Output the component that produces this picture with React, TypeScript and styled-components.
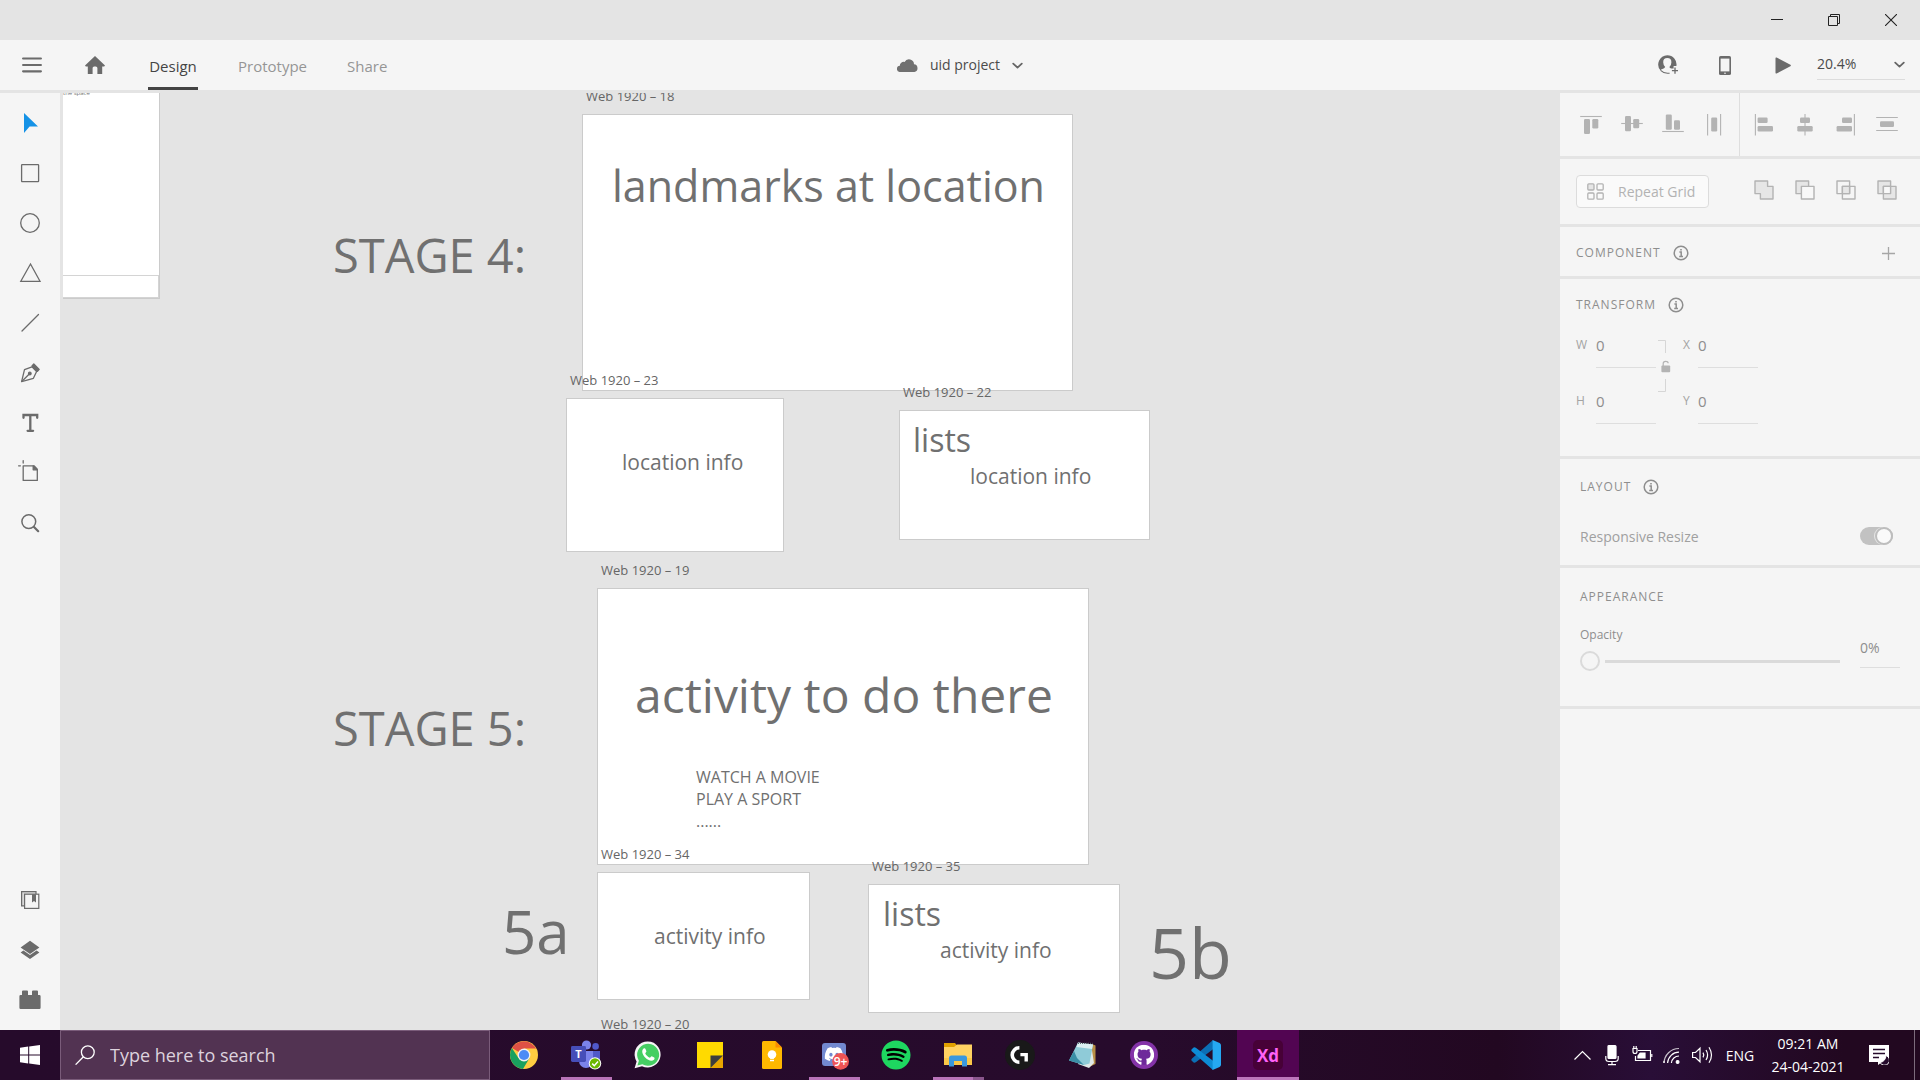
import React from "react";
import styled, { createGlobalStyle, css } from "styled-components";
import { FaDiscord, FaGithub, FaSpotify, FaWhatsapp } from "react-icons/fa";

const GlobalStyle = createGlobalStyle`
  *, *::before, *::after { box-sizing: border-box; }
  body { margin: 0; overflow: hidden; }
  body, button, input, select { font-family: "Open Sans", "Noto Sans", sans-serif; }
  button { border: 0; padding: 0; background: none; color: inherit; cursor: pointer; }
  h2, p { margin: 0; font-weight: 400; }
  svg { display: block; flex: none; }
`;

const color = {
  shell: "#e4e4e4",
  panel: "#f5f5f5",
  icon: "#6b6b6b",
  muted: "#b3b3b3",
  heading: "#8e8e8e",
  canvasText: "#707070",
};

/* ---------- window ---------- */

const Window = styled.div`
  display: flex;
  flex-direction: column;
  height: 100vh;
  background: ${color.shell};
`;

const TitleBar = styled.header`
  display: flex;
  justify-content: flex-end;
  height: 40px;
  padding-right: 1px;
`;

const WindowButton = styled.button`
  display: grid;
  place-items: center;
  width: 57px;
  height: 40px;
  color: #222;
`;

const MenuBar = styled.nav`
  display: grid;
  grid-template-columns: 1fr auto 1fr;
  align-items: center;
  height: 50px;
  background: ${color.panel};
  color: ${color.icon};
`;

const MenuLeft = styled.div`
  display: flex;
  align-items: center;
  height: 50px;
  padding-left: 20px;
`;

const IconButton = styled.button<{ $width: number }>`
  display: grid;
  place-items: center;
  width: ${(p) => p.$width}px;
  height: 50px;
`;

const Tabs = styled.div`
  display: flex;
  gap: 40px;
  height: 50px;
  margin-left: 2px;
`;

const Tab = styled.button<{ $active?: boolean }>`
  min-width: ${(p) => (p.$active ? "50px" : "0")};
  padding-top: 4px;
  border-bottom: 3px solid ${(p) => (p.$active ? "#444" : "transparent")};
  color: ${(p) => (p.$active ? "#444" : "#959595")};
  font-size: 15px;
`;

const DocumentButton = styled.button`
  display: flex;
  align-items: center;
  gap: 12px;
  color: #4b4b4b;
  font-size: 14px;
  line-height: 20px;
`;

const MenuRight = styled.div`
  display: flex;
  align-items: center;
  justify-content: flex-end;
  padding-right: 15px;
`;

const ZoomBox = styled.div`
  display: flex;
  align-items: center;
  width: 88px;
  height: 30px;
  margin-left: 4px;
  border-bottom: 1px solid #dcdcdc;
`;

const ZoomSelect = styled.select`
  flex: 1;
  min-width: 0;
  padding: 0 0 3px;
  border: 0;
  appearance: none;
  background: none;
  color: #4b4b4b;
  font-size: 14px;
`;

const Workspace = styled.div`
  display: flex;
  flex: 1;
  gap: 3px;
  min-height: 0;
  padding-top: 3px;
`;

const ToolBar = styled.aside`
  display: flex;
  flex-direction: column;
  justify-content: space-between;
  width: 60px;
  padding: 5px 0;
  background: ${color.panel};
  color: ${color.icon};
`;

const ToolButton = styled.button<{ $active?: boolean }>`
  display: grid;
  place-items: center;
  width: 60px;
  height: 50px;
  color: ${(p) => (p.$active ? "#1592e6" : "inherit")};
`;

/* ---------- canvas ---------- */

const Canvas = styled.main`
  position: relative;
  flex: 1;
  min-width: 0;
  overflow: hidden;
  color: ${color.canvasText};
`;

interface Box {
  $x: number;
  $y: number;
}

const place = css<Box>`
  position: absolute;
  left: ${(p) => p.$x}px;
  top: ${(p) => p.$y}px;
`;

const Artboard = styled.section<Box & { $w: number; $h: number }>`
  ${place}
  width: ${(p) => p.$w}px;
  height: ${(p) => p.$h}px;
  border: 1px solid #cbcbcb;
  background: #fff;
`;

const ArtboardLabel = styled.h2<Box>`
  ${place}
  font-size: 13px;
  line-height: 13px;
  color: #666;
  white-space: nowrap;
`;

const CanvasText = styled.p<Box & { $size: number; $leading?: number }>`
  ${place}
  font-size: ${(p) => p.$size}px;
  line-height: ${(p) => p.$leading ?? p.$size}px;
  white-space: pre;
`;

const OpenPage = styled.div<Box>`
  ${place}
  display: flex;
  flex-direction: column;
  justify-content: flex-end;
  width: 397px;
  height: 266px;
  border: 1px solid #cbcbcb;
  background: #fff;
`;

const PageFooter = styled.div`
  height: 23px;
  border: 1px solid #d4d4d4;
`;

const artboards = [
  { name: "Web 1920 – 18", x: 519, y: 21, w: 491, h: 277 },
  { name: "Web 1920 – 23", x: 503, y: 305, w: 218, h: 154 },
  { name: "Web 1920 – 22", x: 836, y: 317, w: 251, h: 130 },
  { name: "Web 1920 – 19", x: 534, y: 495, w: 492, h: 277 },
  { name: "Web 1920 – 34", x: 534, y: 779, w: 213, h: 128 },
  { name: "Web 1920 – 35", x: 805, y: 791, w: 252, h: 129 },
  { name: "Web 1920 – 20", x: 534, y: 949, w: 492, h: 277 },
];

const texts = [
  { text: "landmarks at location", x: 549, y: 71, size: 43 },
  { text: "STAGE 4:", x: 270, y: 139, size: 47 },
  { text: "location info", x: 559, y: 359, size: 21 },
  { text: "lists", x: 850, y: 331, size: 32 },
  { text: "location info", x: 907, y: 373, size: 21 },
  { text: "activity to do there", x: 572, y: 578, size: 48 },
  { text: "STAGE 5:", x: 270, y: 612, size: 47 },
  { text: "WATCH A MOVIE\nPLAY A SPORT\n......", x: 633, y: 673, size: 16, leading: 22 },
  { text: "5a", x: 439, y: 808, size: 60 },
  { text: "activity info", x: 591, y: 833, size: 21 },
  { text: "lists", x: 820, y: 805, size: 32 },
  { text: "activity info", x: 877, y: 847, size: 21 },
  { text: "5b", x: 1086, y: 824, size: 70 },
];

/* ---------- inspector ---------- */

const Inspector = styled.aside`
  display: flex;
  flex-direction: column;
  gap: 3px;
  width: 360px;
  margin-left: -3px;
  color: ${color.muted};
`;

const AlignRow = styled.section`
  display: flex;
  height: 63px;
  padding-left: 10px;
  background: ${color.panel};
`;

const AlignGroup = styled.div<{ $divided?: boolean }>`
  display: flex;
  align-items: center;
  padding: ${(p) => (p.$divided ? "0 5px 0 0" : "0 0 0 3px")};
  border-right: ${(p) => (p.$divided ? "1px solid #dedede" : "0")};
`;

const AlignButton = styled.button`
  display: grid;
  place-items: center;
  width: 41px;
  height: 41px;
`;

const GridRow = styled.section`
  display: flex;
  align-items: center;
  justify-content: space-between;
  height: 65px;
  padding: 0 13px 0 16px;
  background: ${color.panel};
`;

const RepeatButton = styled.button`
  display: flex;
  align-items: center;
  gap: 14px;
  width: 133px;
  height: 33px;
  padding-left: 10px;
  border: 1px solid #dcdcdc;
  border-radius: 4px;
  background: #fafafa;
  font-size: 14px;
`;

const BooleanGroup = styled.div`
  display: flex;
  padding-bottom: 4px;
`;

const Panel = styled.section<{ $pad: string }>`
  padding: ${(p) => p.$pad};
  background: ${color.panel};
`;

const PanelRest = styled.div`
  flex: 1;
  background: ${color.panel};
`;

const PanelHead = styled.div`
  display: flex;
  align-items: center;
  gap: 12px;
  height: 20px;
  color: ${color.heading};
`;

const PanelTitle = styled.h2`
  font-size: 12px;
  line-height: 20px;
  letter-spacing: 1px;
`;

const AddButton = styled.button`
  margin-left: auto;
  color: #a6a6a6;
`;

const TransformGrid = styled.div`
  display: flex;
  margin-top: 20px;
`;

const FieldColumn = styled.div`
  display: flex;
  flex-direction: column;
  gap: 23px;
`;

const Field = styled.label<{ $label: number }>`
  display: grid;
  grid-template-columns: ${(p) => p.$label}px 60px;
  font-size: 12px;
  line-height: 20px;
  color: #a3a3a3;
`;

const NumberInput = styled.input`
  width: 100%;
  height: 33px;
  padding: 0 0 12px;
  border: 0;
  border-bottom: 1px solid #dedede;
  background: none;
  color: ${color.heading};
  font-size: 15px;
`;

const LinkButton = styled.button`
  width: 27px;
  height: 60px;
`;

const SwitchRow = styled.label`
  display: flex;
  align-items: center;
  justify-content: space-between;
  height: 20px;
  margin-top: 29px;
  padding-right: 7px;
  color: #a0a0a0;
  font-size: 14px;
`;

const Switch = styled.input`
  display: flex;
  justify-content: flex-end;
  width: 33px;
  height: 18px;
  margin: 0;
  border-radius: 9px;
  appearance: none;
  background: #c2c2c2;

  &::after {
    content: "";
    width: 18px;
    height: 18px;
    border: 2px solid #bdbdbd;
    border-radius: 50%;
    background: #fafafa;
    box-shadow: -1px 0 0 #e6e6e6;
  }
`;

const OpacityRow = styled.div`
  display: flex;
  align-items: flex-end;
  gap: 20px;
  margin-top: 20px;
`;

const SliderLabel = styled.label`
  display: flex;
  flex-direction: column;
  gap: 8px;
  width: 260px;
  color: ${color.heading};
  font-size: 12px;
  line-height: 16px;
`;

const Slider = styled.input`
  width: 100%;
  height: 20px;
  margin: 0;
  appearance: none;
  background: linear-gradient(90deg, transparent 25px, #dadada 25px) center / 100% 3px no-repeat;

  &::-webkit-slider-thumb {
    width: 20px;
    height: 20px;
    border: 2px solid #dadada;
    border-radius: 50%;
    appearance: none;
    background: ${color.panel};
  }
`;

const PercentInput = styled(NumberInput)`
  width: 40px;
  margin-bottom: 3px;
  padding-bottom: 8px;
  font-size: 14px;
`;

/* ---------- taskbar ---------- */

const TaskBar = styled.footer`
  display: flex;
  height: 50px;
  background: linear-gradient(90deg, #260b2b 0%, #270b2c 60%, #220821 78%, #290e37 86%, #220820 96%);
  color: #fff;
`;

const StartButton = styled.button`
  display: grid;
  place-items: center;
  width: 60px;
`;

const SearchBox = styled.label`
  display: flex;
  align-items: center;
  gap: 15px;
  width: 430px;
  margin-right: 3px;
  padding-left: 14px;
  border: 1px solid #7a5c7a;
  background: #523352;
`;

const SearchInput = styled.input`
  flex: 1;
  min-width: 0;
  padding: 0;
  border: 0;
  outline: 0;
  background: none;
  color: #fff;
  font-size: 18px;

  &::placeholder { color: #ddd2dd; }
`;

const Apps = styled.div`
  display: flex;
  flex: 1;
`;

const AppButton = styled.button<{ $state?: "open" | "stacked" | "active" }>`
  display: grid;
  place-items: center;
  width: 62px;
  height: 50px;
  background: ${(p) =>
    p.$state === "active"
      ? "linear-gradient(#bd76bd, #bd76bd) bottom / 100% 3px no-repeat #520552"
      : p.$state === "open"
        ? "linear-gradient(#b873b8, #b873b8) bottom / 51px 3px no-repeat"
        : p.$state === "stacked"
          ? "linear-gradient(90deg, #b873b8 40px, #8a568d 40px) bottom / 51px 3px no-repeat"
          : "none"};
`;

const Tray = styled.div`
  display: flex;
  align-items: center;
`;

const TrayButton = styled.button<{ $width?: number }>`
  display: grid;
  place-items: center;
  width: ${(p) => p.$width ?? 30}px;
  height: 50px;
  font-size: 14px;
  line-height: 23px;
`;

const ShowDesktop = styled.button`
  width: 6px;
  height: 50px;
  margin-left: 9px;
  border-left: 1px solid #7c6b7c;
`;

/* ---------- icons ---------- */

const Chevron = ({ size = 11 }: { size?: number }) => (
  <svg width={size} height={size} viewBox="0 0 11 11" fill="none" stroke="#666" strokeWidth="1.8" strokeLinecap="round" strokeLinejoin="round">
    <path d="M1.2 3.6 5.5 7.6 9.8 3.6" />
  </svg>
);

const Info = () => (
  <svg width="16" height="16" viewBox="0 0 16 16" fill="none" stroke={color.heading} strokeWidth="1.5">
    <circle cx="8" cy="8" r="6.8" />
    <path d="M6.4 7H8.2V11.2M6.2 11.4H10" />
    <path d="M8 4V5.6" strokeWidth="1.6" />
  </svg>
);

const line = { fill: "none", stroke: "currentColor", strokeWidth: 1.3, strokeLinejoin: "round", strokeLinecap: "round" } as const;

const tools: { name: string; icon: React.ReactNode }[] = [
  { name: "Select", icon: <path d="M4 0V20L9.6 13.6H18Z" fill="currentColor" /> },
  { name: "Rectangle", icon: <rect x="1.6" y="1.6" width="17" height="17" rx=".6" {...line} /> },
  { name: "Ellipse", icon: <circle cx="10" cy="10" r="9.3" {...line} /> },
  { name: "Polygon", icon: <path d="M10.5 1 20 18.3H.8Z" {...line} strokeLinejoin="miter" /> },
  { name: "Line", icon: <path d="M2 18 18.5 1.5" {...line} /> },
  {
    name: "Pen",
    icon: (
      <g {...line}>
        <path d="M12 3.8 4.5 6.6 1.6 18.6 13.4 15.3 16.6 8.5Z" />
        <path d="M2 18.2 9.5 10.8" />
        <circle cx="9.8" cy="10.5" r="1.3" fill="currentColor" />
        <path d="M13.8 1 19.2 6.4 17.4 8.4 12 3Z" fill="currentColor" />
      </g>
    ),
  },
  {
    name: "Text",
    icon: <path d="M3.5 4.8V2H17.2V4.8M10.3 2V17.6M7.6 17.8H13.1" fill="none" stroke="currentColor" strokeWidth="2.3" strokeLinecap="round" />,
  },
  {
    name: "Artboard",
    icon: (
      <g {...line}>
        <path d="M3.2 2.8H14L17.3 6.2V17.4H3.2Z" />
        <path d="M13.2 3 17 6.8H13.2Z" fill="currentColor" />
        <path d="M-1.4 2.8H.4M3.2-2.4V0" />
      </g>
    ),
  },
  {
    name: "Zoom",
    icon: (
      <g fill="none" stroke="currentColor" strokeLinecap="round">
        <circle cx="8.8" cy="8.6" r="6.9" strokeWidth="1.5" />
        <path d="M14 14 18.2 18.2" strokeWidth="2.2" />
      </g>
    ),
  },
];

const panels: { name: string; icon: React.ReactNode }[] = [
  {
    name: "Libraries",
    icon: (
      <g fill="none" stroke="currentColor" strokeWidth="1.2">
        <path d="M4 15.8H1.6V1.6H16V4" fill="#d8d8d8" />
        <rect x="4.6" y="4.2" width="14.2" height="14.2" fill="#f5f5f5" />
        <path d="M12 4.2H16V12.6L14 10.9 12 12.6Z" fill="currentColor" stroke="none" />
      </g>
    ),
  },
  {
    name: "Layers",
    icon: (
      <g fill="currentColor">
        <path d="M10 .8 19.4 7.4 10 14 .6 7.4Z" />
        <path d="M.6 12.4 3.4 10.6 10 15.1 16.6 10.6 19.4 12.4 10 19Z" />
      </g>
    ),
  },
  {
    name: "Plugins",
    icon: <path d="M-.6 6.2Q-.6 5 .6 5H2V1.4Q2 .4 3 .4H7Q8 .4 8 1.4V5H12V1.4Q12 .4 13 .4H17Q18 .4 18 1.4V5H19.4Q20.6 5 20.6 6.2V17.8Q20.6 19 19.4 19H.6Q-.6 19-.6 17.8Z" fill="currentColor" />,
  },
];

const ToolIcon = ({ children }: { children: React.ReactNode }) => (
  <svg width="20" height="20" viewBox="0 0 20 20" overflow="visible">{children}</svg>
);

type Bar = [number, number, number, number];

const AlignIcon = ({ lines, bars }: { lines: string; bars: Bar[] }) => (
  <svg width="22" height="22" viewBox="0 0 22 22" fill={color.muted}>
    <path d={lines} stroke={color.muted} strokeWidth="1.1" />
    {bars.map(([x, y, w, h], i) => (
      <rect key={i} x={x} y={y} width={w} height={h} rx="1.2" />
    ))}
  </svg>
);

const alignVertical: { name: string; lines: string; bars: Bar[] }[] = [
  { name: "Align top", lines: "M.2 2.5H21.8", bars: [[4, 5, 6, 15], [12.3, 5, 6, 9.5]] },
  { name: "Align middle", lines: "M.2 9.5H21.8", bars: [[4, 2, 6, 15.2], [12.2, 5, 6, 9.3]] },
  { name: "Align bottom", lines: "M.2 17.5H21.8", bars: [[3.8, .6, 6, 15.2], [12, 6.2, 6, 9.6]] },
  { name: "Distribute horizontally", lines: "M4.6 0V21.6M17.6 0V21.6", bars: [[8.2, 3.6, 6, 13.8]] },
];

const alignHorizontal: { name: string; lines: string; bars: Bar[] }[] = [
  { name: "Align left", lines: "M2.4 0V21.6", bars: [[4.6, 3.6, 10, 5.4], [4.6, 12, 15.4, 5.4]] },
  { name: "Align center", lines: "M11 0V21.6", bars: [[6, 3.6, 10, 5.4], [3.3, 12, 15.4, 5.4]] },
  { name: "Align right", lines: "M19.4 0V21.6", bars: [[7, 3.6, 10, 5.4], [1.6, 12, 15.4, 5.4]] },
  { name: "Distribute vertically", lines: "M.2 3.5H21.8M.2 16.5H21.8", bars: [[4, 7.3, 14, 5.6]] },
];

const soft = "#e6e6e6";
const booleans: { name: string; icon: React.ReactNode }[] = [
  { name: "Add", icon: <path d="M1 1H13.6V6.4H19V19H6.4V13.6H1Z" fill={soft} /> },
  { name: "Subtract", icon: <><path d="M6.4 13.6H1V1H13.6V6.4" fill={soft} /><rect x="6.4" y="6.4" width="12.6" height="12.6" fill="#f8f8f8" /></> },
  { name: "Intersect", icon: <><rect x="1" y="1" width="12.6" height="12.6" /><rect x="6.4" y="6.4" width="12.6" height="12.6" /><rect x="6.4" y="6.4" width="7.2" height="7.2" fill={soft} /></> },
  { name: "Exclude overlap", icon: <><rect x="1" y="1" width="12.6" height="12.6" fill={soft} /><rect x="6.4" y="6.4" width="12.6" height="12.6" fill={soft} /><rect x="6.4" y="6.4" width="7.2" height="7.2" fill="#f8f8f8" /></> },
];

const ChromeLogo = () => (
  <svg width="28" height="28" viewBox="0 0 28 28">
    <circle cx="14" cy="14" r="14" fill="#ffcd41" />
    <path d="M14 14 1.9 7A14 14 0 0 1 26.1 7.6H14Z" fill="#de5145" />
    <path d="M1.9 7A14 14 0 0 0 13 28L19.4 17.2 14 14 8.6 17.2Z" fill="#19a15f" />
    <circle cx="14" cy="14" r="6.4" fill="#f1f1f1" />
    <circle cx="14" cy="14" r="5.1" fill="#4c8bf5" />
  </svg>
);

const TeamsLogo = () => (
  <svg width="32" height="30" viewBox="0 0 32 30">
    <circle cx="16.5" cy="5" r="4.6" fill="#7b83eb" />
    <circle cx="25.6" cy="6.4" r="3.3" fill="#5059c9" />
    <path d="M21 11H30V19A5 5 0 0 1 21 22Z" fill="#5059c9" />
    <path d="M9 11H23V21A7 7 0 0 1 9 21Z" fill="#7b83eb" />
    <rect x="1" y="6" width="15" height="16" rx="1.4" fill="#464eb8" />
    <text x="8.5" y="18" textAnchor="middle" fontSize="11" fontWeight="700" fontFamily="Open Sans" fill="#fff">T</text>
    <circle cx="25" cy="23.4" r="6.2" fill="#fff" />
    <circle cx="25" cy="23.4" r="5.2" fill="#6bb700" />
    <path d="M22.2 23.6 24.3 25.7 28 21.6" fill="none" stroke="#fff" strokeWidth="1.5" />
  </svg>
);

const WhatsAppLogo = () => (
  <svg width="28" height="28" viewBox="0 0 28 28">
    <path d="M.6 27.2 2.6 20.4A13 13 0 1 1 8 25.2Z" fill="#f5f5f5" />
    <path d="M3.4 24.5 4.9 19.8A11 11 0 1 1 8.4 23.2Z" fill="#45cf63" />
    <path d="M9.6 7.6C10.4 7 11.2 7.2 11.5 8L12.4 10.2C12.6 10.8 11.4 11.8 11.2 12.3 12 14.2 13.8 15.9 15.8 16.7 16.4 16.4 17.2 15 17.8 15.2L20.2 16.4C20.8 16.8 20.6 18 20 18.7 17.6 21 14 19.2 11.4 16.8 8.8 14.2 6.8 10 9.6 7.6Z" fill="#fff" />
  </svg>
);

const StickyLogo = () => (
  <svg width="26" height="26" viewBox="0 0 26 26">
    <path d="M0 0H26V26H0Z" fill="#ffda00" />
    <path d="M13.5 26 26 13.5V26Z" fill="#e8a600" />
    <path d="M13.5 13.5H26L13.5 26Z" fill="#3d3d3d" />
  </svg>
);

const KeepLogo = () => (
  <svg width="20" height="28" viewBox="0 0 20 28">
    <path d="M1.5 0H13.5L20 6.5V26.5Q20 28 18.5 28H1.5Q0 28 0 26.5V1.5Q0 0 1.5 0Z" fill="#ffb800" />
    <path d="M13.5 0 20 6.5H13.5Z" fill="#f98c00" />
    <circle cx="10" cy="13.5" r="4.3" fill="#fff" />
    <path d="M8 16H12V17.8H8ZM8 18.8H12V20.2H8Z" fill="#fff" />
  </svg>
);

const DiscordLogo = () => (
  <svg width="30" height="30" viewBox="0 0 30 30">
    <rect x="3" y="3" width="24" height="23" rx="3" fill="#7289d0" />
    <svg x="5" y="4" width="20" height="20" viewBox="0 0 20 20"><FaDiscord size={20} color="#fff" /></svg>
    <circle cx="21.6" cy="21.4" r="8.4" fill="#ee5455" />
    <text x="21.6" y="25.6" textAnchor="middle" fontSize="12" fontWeight="600" fontFamily="Open Sans" fill="#fff">9+</text>
  </svg>
);

const SpotifyLogo = () => (
  <svg width="30" height="30" viewBox="0 0 30 30">
    <circle cx="15" cy="15" r="13" fill="#000" />
    <FaSpotify size={30} color="#1ed760" />
  </svg>
);

const ExplorerLogo = () => (
  <svg width="28" height="24" viewBox="0 0 28 24">
    <path d="M0 0H11L13 2.4V5H0Z" fill="#e0a000" />
    <path d="M0 4H10L13 1.6H28V22H0Z" fill="#ffd262" />
    <path d="M0 15H28V22H0Z" fill="#fbc748" />
    <path d="M5 23.5V15Q5 12.5 7.5 12.5H20.5Q23 12.5 23 15V23.5H18V18H10V23.5Z" fill="#3a98de" />
  </svg>
);

const LogitechLogo = () => (
  <svg width="30" height="30" viewBox="0 0 30 30">
    <circle cx="15" cy="15" r="15" fill="#191919" />
    <path d="M14.4 7.8A7.2 7.2 0 0 0 14.4 22.2" fill="none" stroke="#fff" strokeWidth="3.6" />
    <path d="M15.4 14.6H21.2V21.6" fill="none" stroke="#fff" strokeWidth="3.4" />
  </svg>
);

const NotepadLogo = () => (
  <svg width="28" height="28" viewBox="0 0 28 28">
    <path d="M24 3 27.5 4.5V23L21 26Z" fill="#b98f45" />
    <path d="M23 3 26 22 21 27 10 23Z" fill="#dfe9e8" />
    <path d="M10 1.5 25 3.5 21.5 22.5 16 24 1 19.5Z" fill="#8fcbd8" />
    <path d="M10 1.5 25 3.5 24 8 8.5 6Z" fill="#dceff2" />
    <path d="M6 10 1 19.5 16 24 9 17Z" fill="#3b8fa6" />
    <path d="M10 2.4H24.6" stroke="#5d6a6c" strokeWidth="1.4" strokeDasharray="1 1" />
  </svg>
);

const GithubLogo = () => (
  <svg width="28" height="28" viewBox="0 0 28 28">
    <circle cx="14" cy="14" r="14" fill="#8433a8" />
    <circle cx="14" cy="14" r="10" fill="#6e2a9a" />
    <svg x="3.5" y="3.5" width="21" height="21" viewBox="0 0 21 21"><FaGithub size={21} color="#fff" /></svg>
  </svg>
);

const CodeLogo = () => (
  <svg width="30" height="30" viewBox="0 0 30 30">
    <path d="M22 0 1 18.4Q-.4 19.8 1 21L2.6 22.4Q3.6 23 4.8 22.2L22 9.2Z" fill="#0b6fb5" />
    <path d="M22 30 1 11.6Q-.4 10.2 1 9L2.6 7.6Q3.6 7 4.8 7.8L22 20.8Z" fill="#0d8bd5" />
    <path d="M21.6 0 28.6 3Q30 3.7 30 5.2V24.8Q30 26.3 28.6 27L21.6 30Z" fill="#25a8f2" />
  </svg>
);

const XdLogo = () => (
  <svg width="30" height="30" viewBox="0 0 30 30">
    <rect width="30" height="30" rx="5" fill="#470137" />
    <text x="15" y="21.5" textAnchor="middle" fontSize="17" fontWeight="700" fontFamily="Open Sans" fill="#ff61f6">Xd</text>
  </svg>
);

const apps: { name: string; icon: React.ReactNode; state?: "open" | "stacked" | "active" }[] = [
  { name: "Chrome", icon: <ChromeLogo /> },
  { name: "Teams", icon: <TeamsLogo />, state: "open" },
  { name: "WhatsApp", icon: <WhatsAppLogo /> },
  { name: "Sticky Notes", icon: <StickyLogo /> },
  { name: "Keep", icon: <KeepLogo /> },
  { name: "Discord", icon: <DiscordLogo />, state: "open" },
  { name: "Spotify", icon: <SpotifyLogo /> },
  { name: "File Explorer", icon: <ExplorerLogo />, state: "stacked" },
  { name: "G HUB", icon: <LogitechLogo /> },
  { name: "Notepad", icon: <NotepadLogo /> },
  { name: "GitHub Desktop", icon: <GithubLogo /> },
  { name: "Visual Studio Code", icon: <CodeLogo /> },
  { name: "Adobe XD", icon: <XdLogo />, state: "active" },
];

const trayIcons: { name: string; icon: React.ReactNode }[] = [
  { name: "Show hidden icons", icon: <path d="M2.5 14.5 10.5 6.5 18.5 14.5" /> },
  {
    name: "Microphone",
    icon: <><rect x="6" y=".5" width="8" height="13" rx="1" fill="#fff" /><path d="M3.8 11V13.5Q3.8 16.5 7 16.5H13Q16.2 16.5 16.2 13.5V11M10 16.5V19.5M6 19.7H14" /></>,
  },
  {
    name: "Battery",
    icon: <><path d="M6 5.5H18.5V15.5H3.5V11" /><path d="M8.2 8H13V13H6V11Z" fill="#fff" /><path d="M19.8 9V12M1 3.5V6.5Q1 8.5 3 8.5T5 6.5V3.5ZM1.8 1V3M4.2 1V3" /></>,
  },
  {
    name: "Network",
    icon: (
      <>
        <path d="M2 18A15 15 0 0 1 17 3.5" opacity=".75" />
        <path d="M5.6 18A11.4 11.4 0 0 1 17 7.2M9.4 18A7.6 7.6 0 0 1 17 11M2 18V16" />
        <circle cx="15.6" cy="17" r="1.4" fill="#fff" />
      </>
    ),
  },
  {
    name: "Volume",
    icon: <><path d="M.6 7.5H3.5L8 3.2V16.8L3.5 12.5H.6Z" /><path d="M11 7.6Q12.6 10 11 12.4M14 5Q17.2 10 14 15M17 2.2Q22 10 17 17.8" /></>,
  },
];

/* ---------- page ---------- */

const InspectorPanel = () => (
  <Inspector>
    <AlignRow>
      <AlignGroup $divided>
        {alignVertical.map((a) => (
          <AlignButton key={a.name} aria-label={a.name}><AlignIcon lines={a.lines} bars={a.bars} /></AlignButton>
        ))}
      </AlignGroup>
      <AlignGroup>
        {alignHorizontal.map((a) => (
          <AlignButton key={a.name} aria-label={a.name}><AlignIcon lines={a.lines} bars={a.bars} /></AlignButton>
        ))}
      </AlignGroup>
    </AlignRow>
    <GridRow>
      <RepeatButton>
        <svg width="17" height="17" viewBox="0 0 17 17" fill="none" stroke={color.muted} strokeWidth="1.3">
          <rect x=".8" y=".8" width="6.2" height="6.2" rx="1" fill={soft} />
          <rect x="10" y=".8" width="6.2" height="6.2" rx="1" />
          <rect x=".8" y="10" width="6.2" height="6.2" rx="1" />
          <rect x="10" y="10" width="6.2" height="6.2" rx="1" />
        </svg>
        Repeat Grid
      </RepeatButton>
      <BooleanGroup>
        {booleans.map((b) => (
          <AlignButton key={b.name} aria-label={b.name}>
            <svg width="20" height="20" viewBox="0 0 20 20" fill="none" stroke={color.muted} strokeWidth="1.4" strokeLinejoin="round">{b.icon}</svg>
          </AlignButton>
        ))}
      </BooleanGroup>
    </GridRow>
    <Panel $pad="16px 25px 13px 16px">
      <PanelHead>
        <PanelTitle>COMPONENT</PanelTitle>
        <Info />
        <AddButton aria-label="Add component">
          <svg width="13" height="13" viewBox="0 0 13 13" stroke="currentColor" strokeWidth="1.3"><path d="M6.5 0V13M0 6.5H13" /></svg>
        </AddButton>
      </PanelHead>
    </Panel>
    <Panel $pad="16px 20px 32px 16px">
      <PanelHead>
        <PanelTitle>TRANSFORM</PanelTitle>
        <Info />
      </PanelHead>
      <TransformGrid>
        <FieldColumn>
          <Field $label={20}>W<NumberInput defaultValue="0" /></Field>
          <Field $label={20}>H<NumberInput defaultValue="0" /></Field>
        </FieldColumn>
        <LinkButton aria-label="Lock aspect ratio">
          <svg width="27" height="60" viewBox="0 0 27 60" fill="none" stroke="#d6d6d6" strokeWidth="1">
            <path d="M2 5.5H9.5V18M9.5 44V56.5H2" />
            <path d="M7.2 31V28.6Q7.2 26.4 9.6 26.4T12.2 28.2" stroke={color.muted} strokeWidth="1.2" />
            <rect x="5.4" y="30.4" width="8.8" height="6.8" rx="1" fill={color.muted} stroke="none" />
          </svg>
        </LinkButton>
        <FieldColumn>
          <Field $label={15}>X<NumberInput defaultValue="0" /></Field>
          <Field $label={15}>Y<NumberInput defaultValue="0" /></Field>
        </FieldColumn>
      </TransformGrid>
    </Panel>
    <Panel $pad="18px 20px 19px">
      <PanelHead>
        <PanelTitle>LAYOUT</PanelTitle>
        <Info />
      </PanelHead>
      <SwitchRow>
        Responsive Resize
        <Switch type="checkbox" role="switch" defaultChecked />
      </SwitchRow>
    </Panel>
    <Panel $pad="19px 20px 35px">
      <PanelHead>
        <PanelTitle>APPEARANCE</PanelTitle>
      </PanelHead>
      <OpacityRow>
        <SliderLabel>
          Opacity
          <Slider type="range" min="0" max="100" defaultValue="0" />
        </SliderLabel>
        <PercentInput aria-label="Opacity value" defaultValue="0%" />
      </OpacityRow>
    </Panel>
    <PanelRest />
  </Inspector>
);

const ArtboardCanvas = () => (
  <Canvas>
    <OpenPage $x={-300} $y={-60}>
      <PageFooter />
    </OpenPage>
    <CanvasText $x={0} $y={-3} $size={6}>the space</CanvasText>
    {artboards.map((a) => (
      <React.Fragment key={a.name}>
        <Artboard $x={a.x} $y={a.y} $w={a.w} $h={a.h} />
        <ArtboardLabel $x={a.x + 4} $y={a.y - 24}>{a.name}</ArtboardLabel>
      </React.Fragment>
    ))}
    {texts.map((t, i) => (
      <CanvasText key={i} $x={t.x} $y={t.y} $size={t.size} $leading={t.leading}>{t.text}</CanvasText>
    ))}
  </Canvas>
);

const WindowsTaskBar = () => (
  <TaskBar>
    <StartButton aria-label="Start">
      <svg width="20" height="20" viewBox="0 0 20 20" fill="#fff">
        <path d="M0 2.8 8.2 1.6V9.5H0ZM9.2 1.5 20 0V9.5H9.2ZM0 10.5H8.2V18.4L0 17.2ZM9.2 10.5H20V20L9.2 18.5Z" />
      </svg>
    </StartButton>
    <SearchBox>
      <svg width="20" height="20" viewBox="0 0 20 20" fill="none" stroke="#fff" strokeWidth="1.3">
        <circle cx="12.8" cy="7.2" r="6.4" />
        <path d="M8.4 11.8.6 19.6" />
      </svg>
      <SearchInput type="text" aria-label="Search" placeholder="Type here to search" />
    </SearchBox>
    <Apps>
      {apps.map((a) => (
        <AppButton key={a.name} aria-label={a.name} $state={a.state}>{a.icon}</AppButton>
      ))}
    </Apps>
    <Tray>
      {trayIcons.map((t) => (
        <TrayButton key={t.name} aria-label={t.name}>
          <svg width="20" height="20" viewBox="0 0 20 20" overflow="visible" fill="none" stroke="#fff" strokeWidth="1.2">{t.icon}</svg>
        </TrayButton>
      ))}
      <TrayButton $width={46}>ENG</TrayButton>
      <TrayButton $width={90}>09:21 AM<br />24-04-2021</TrayButton>
      <TrayButton $width={52} aria-label="Notifications">
        <svg width="20" height="20" viewBox="0 0 20 20">
          <path d="M0 0H20V17H13L9 20V17H0Z" fill="#fff" />
          <path d="M4 4.5H16M4 8.5H16M4 12.5H10" stroke="#260b2c" strokeWidth="1.3" />
          <path d="M17 10.5A5 5 0 1 1 11 17.5Q16.5 16.5 17 10.5Z" fill="#260b2c" stroke="#fff" strokeWidth="1" />
        </svg>
      </TrayButton>
      <ShowDesktop aria-label="Show desktop" />
    </Tray>
  </TaskBar>
);

export default function App() {
  return (
    <Window>
      <GlobalStyle />
      <TitleBar>
        <WindowButton aria-label="Minimize">
          <svg width="12" height="12" viewBox="0 0 12 12" stroke="currentColor"><path d="M0 5.5H12" /></svg>
        </WindowButton>
        <WindowButton aria-label="Restore">
          <svg width="12" height="12" viewBox="0 0 12 12" fill="none" stroke="currentColor"><path d="M.5 2.5H9.5V11.5H.5ZM2.5 2.5V.5H11.5V9.5H9.5" /></svg>
        </WindowButton>
        <WindowButton aria-label="Close">
          <svg width="12" height="12" viewBox="0 0 12 12" stroke="currentColor" strokeWidth="1.1"><path d="M0 0 12 12M12 0 0 12" /></svg>
        </WindowButton>
      </TitleBar>
      <MenuBar>
        <MenuLeft>
          <IconButton $width={24} aria-label="Menu">
            <svg width="20" height="16" viewBox="0 0 20 16" stroke="currentColor" strokeWidth="2.2" strokeLinecap="round"><path d="M1.1 1.5H18.9M1.1 8H18.9M1.1 14.3H18.9" /></svg>
          </IconButton>
          <IconButton $width={102} aria-label="Home">
            <svg width="20" height="18" viewBox="0 0 20 18"><path d="M10 0 20 9.4 19.2 10.4H17.2V18H12.4V12Q12.4 10.4 10.8 10.4H9.2Q7.6 10.4 7.6 12V18H2.8V10.4H.8L0 9.4Z" fill="currentColor" /></svg>
          </IconButton>
          <Tabs>
            <Tab $active>Design</Tab>
            <Tab>Prototype</Tab>
            <Tab>Share</Tab>
          </Tabs>
        </MenuLeft>
        <DocumentButton>
          <svg width="21" height="14" viewBox="0 0 21 14" fill={color.canvasText}>
            <path d="M3.2 14A3.1 3.1 0 0 1 2.8 7.8 3.9 3.9 0 0 1 7.6 3.9 5 5 0 0 1 17 6.3 3.9 3.9 0 0 1 17.4 14Z" />
          </svg>
          uid project
          <Chevron />
        </DocumentButton>
        <MenuRight>
          <IconButton $width={57} aria-label="Share">
            <svg width="20" height="20" viewBox="0 0 20 20">
              <path fillRule="evenodd" fill="currentColor" d="M9.3.3A9.2 9.2 0 0 1 18.4 11H15.6V13.6H13.4Q11.6 13 11.4 12 13.4 10 13.4 7.2 13.4 3 9.3 3T5.2 7.2Q5.2 10 7.2 12 7 13.2 3.2 14.4L2.6 15.6A9.2 9.2 0 0 1 9.3.3Z" />
              <path d="M2.6 15.4Q5.6 18.4 10 18.2H11.6" fill="none" stroke="currentColor" strokeWidth="1.1" />
              <path d="M17 12.6V18.8M13.9 15.7H20" stroke="currentColor" strokeWidth="1.3" />
            </svg>
          </IconButton>
          <IconButton $width={57} aria-label="Device preview">
            <svg width="12" height="19" viewBox="0 0 12 19">
              <rect width="12" height="19" rx="1.6" fill="currentColor" />
              <rect x="1.6" y="2.6" width="8.8" height="12.8" fill="#f5f5f5" />
              <circle cx="6" cy="17.2" r=".8" fill="#f5f5f5" />
            </svg>
          </IconButton>
          <IconButton $width={60} aria-label="Play">
            <svg width="16" height="17" viewBox="0 0 16 17"><path d="M.5 1.2Q.5 0 1.6.6L15.4 7.8Q16.4 8.5 15.4 9.2L1.6 16.4Q.5 17 .5 15.8Z" fill="currentColor" /></svg>
          </IconButton>
          <ZoomBox>
            <ZoomSelect aria-label="Zoom level" defaultValue="20.4%">
              <option>20.4%</option>
            </ZoomSelect>
            <Chevron />
          </ZoomBox>
        </MenuRight>
      </MenuBar>
      <Workspace>
        <ToolBar>
          <div>
            {tools.map((t, i) => (
              <ToolButton key={t.name} aria-label={t.name} $active={i === 0}><ToolIcon>{t.icon}</ToolIcon></ToolButton>
            ))}
          </div>
          <div>
            {panels.map((t) => (
              <ToolButton key={t.name} aria-label={t.name}><ToolIcon>{t.icon}</ToolIcon></ToolButton>
            ))}
          </div>
        </ToolBar>
        <ArtboardCanvas />
        <InspectorPanel />
      </Workspace>
      <WindowsTaskBar />
    </Window>
  );
}
